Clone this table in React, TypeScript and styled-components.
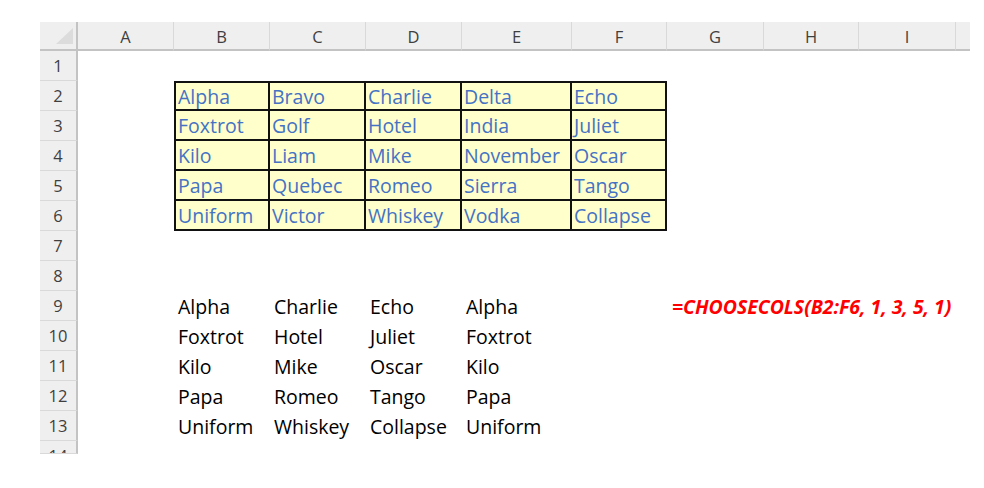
import React from "react";
import styled, { createGlobalStyle, css } from "styled-components";

const GlobalStyle = createGlobalStyle`
  html, body {
    margin: 0;
    padding: 0;
    background: #ffffff;
  }
  body {
    font-family: "Open Sans", "Noto Sans", sans-serif;
  }
`;

const COLS = ["A", "B", "C", "D", "E", "F", "G", "H", "I"];
const COL_WIDTHS = [96, 96, 96, 96, 110, 95, 97, 95, 97];

const Sheet = styled.div`
  display: grid;
  margin: 22px 0 0 40px;
  width: max-content;
  grid-template-columns: 38px ${COL_WIDTHS.map((w) => `${w}px`).join(" ")} 14px;
  grid-template-rows: 29px repeat(13, 30px) 13px;
`;

const Corner = styled.div`
  position: relative;
  background: #efefef;
  border-right: 2px solid #c3c3c3;
  border-bottom: 2px solid #c3c3c3;
  box-sizing: border-box;
`;

const CornerMark = styled.svg`
  position: absolute;
  left: 14px;
  top: 6px;
`;

const ColHeader = styled.div`
  box-sizing: border-box;
  background: #efefef;
  border-right: 1px solid #d9d9d9;
  border-bottom: 2px solid #c3c3c3;
  display: flex;
  align-items: center;
  justify-content: center;
  font-size: 16.5px;
  color: #3f3f3f;
  padding-top: 1px;
`;

const StubHeader = styled.div`
  box-sizing: border-box;
  background: #efefef;
  border-bottom: 2px solid #c3c3c3;
`;

const RowHeader = styled.div`
  box-sizing: border-box;
  background: #efefef;
  border-right: 2px solid #c3c3c3;
  border-bottom: 1px solid #d9d9d9;
  overflow: hidden;
`;

const RowLabel = styled.div`
  height: 29px;
  line-height: 29px;
  text-align: center;
  font-size: 16.5px;
  color: #3f3f3f;
`;

type Tone = "blue" | "black" | "formula";

const Cell = styled.div<{
  $boxed?: boolean;
  $top?: boolean;
  $left?: boolean;
  $tone?: Tone;
}>`
  box-sizing: border-box;
  display: flex;
  align-items: center;
  padding-left: 4px;
  white-space: nowrap;
  overflow: visible;
  font-size: 19.5px;
  color: #000000;
  ${(p) =>
    p.$boxed &&
    css`
      background: #ffffcc;
      border-right: 2px solid #111111;
      border-bottom: 2px solid #111111;
      padding-left: 2px;
    `}
  ${(p) =>
    p.$boxed &&
    p.$top &&
    css`
      border-top: 2px solid #111111;
    `}
  ${(p) =>
    p.$boxed &&
    p.$left &&
    css`
      border-left: 2px solid #111111;
    `}
  ${(p) =>
    p.$tone === "blue" &&
    css`
      color: #4472c4;
    `}
  ${(p) =>
    p.$tone === "formula" &&
    css`
      color: #ff0000;
      font-weight: 700;
      font-style: italic;
      font-size: 19.5px;
      letter-spacing: -0.05px;
      padding-left: 5px;
    `}
`;

const source = [
  ["Alpha", "Bravo", "Charlie", "Delta", "Echo"],
  ["Foxtrot", "Golf", "Hotel", "India", "Juliet"],
  ["Kilo", "Liam", "Mike", "November", "Oscar"],
  ["Papa", "Quebec", "Romeo", "Sierra", "Tango"],
  ["Uniform", "Victor", "Whiskey", "Vodka", "Collapse"],
];

const picked = source.map((r) => [r[0], r[2], r[4], r[0]]);

type CellData = {
  text?: string;
  boxed?: boolean;
  top?: boolean;
  left?: boolean;
  tone?: Tone;
};

function cellFor(row: number, col: number): CellData {
  // row: 1-based sheet row, col: 0-based (A = 0)
  if (row >= 2 && row <= 6 && col >= 1 && col <= 5) {
    return {
      text: source[row - 2][col - 1],
      boxed: true,
      top: row === 2,
      left: col === 1,
      tone: "blue",
    };
  }
  if (row >= 9 && row <= 13 && col >= 1 && col <= 4) {
    return { text: picked[row - 9][col - 1], tone: "black" };
  }
  if (row === 9 && col === 6) {
    return { text: "=CHOOSECOLS(B2:F6, 1, 3, 5, 1)", tone: "formula" };
  }
  return {};
}

export default function App() {
  const rows = Array.from({ length: 13 }, (_, i) => i + 1);
  return (
    <>
      <GlobalStyle />
      <Sheet>
        <Corner>
          <CornerMark width="20" height="18" viewBox="0 0 20 18">
            <polygon points="19,0 19,16 2,16" fill="#dcdcdc" />
          </CornerMark>
        </Corner>
        {COLS.map((c) => (
          <ColHeader key={c}>{c}</ColHeader>
        ))}
        <StubHeader />
        {rows.map((r) => (
          <React.Fragment key={r}>
            <RowHeader>
              <RowLabel>{r}</RowLabel>
            </RowHeader>
            {COLS.map((c, ci) => {
              const d = cellFor(r, ci);
              return (
                <Cell
                  key={c}
                  $boxed={d.boxed}
                  $top={d.top}
                  $left={d.left}
                  $tone={d.tone}
                >
                  {d.text}
                </Cell>
              );
            })}
            <Cell />
          </React.Fragment>
        ))}
        <RowHeader>
          <RowLabel>14</RowLabel>
        </RowHeader>
      </Sheet>
    </>
  );
}
